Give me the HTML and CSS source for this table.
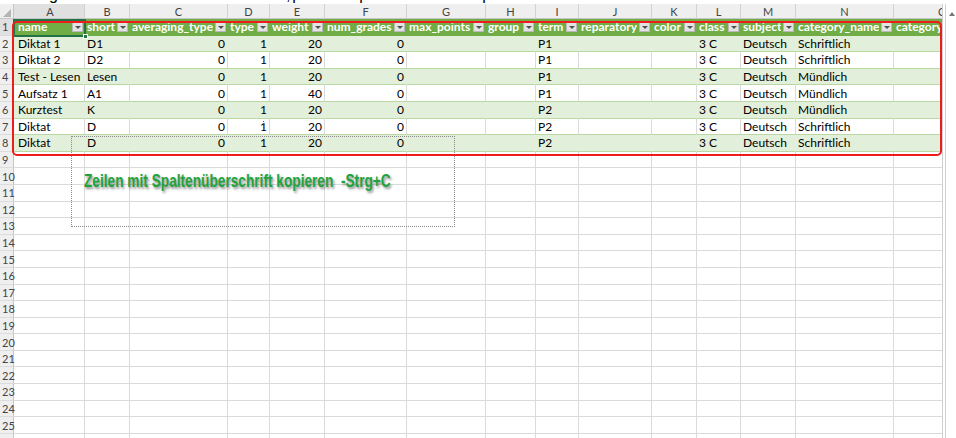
FILE: index.html
```html
<!DOCTYPE html>
<html lang="de">
<head>
<meta charset="utf-8">
<title>Tabelle</title>
<link rel="stylesheet" href="styles.css">
</head>
<body>
<div class="cut"><div class="cut-line"><span class="c1">g</span><span class="c2">,</span><span class="c3">p</span><span class="c4">p</span><span class="c5">p</span></div></div>
<div class="window">
  <div class="sheet">
    <div class="row colhdr">
      <div class="corner"><span class="tri"></span></div>
      <div class="active">A</div><div>B</div><div>C</div><div>D</div><div>E</div><div>F</div><div>G</div><div>H</div><div>I</div><div>J</div><div>K</div><div>L</div><div>M</div><div>N</div><div>O</div>
    </div>
    <div class="row thead">
      <div class="rn active">1</div>
      <div class="h"><span>name</span><i class="dd"></i></div>
      <div class="h"><span>short</span><i class="dd"></i></div>
      <div class="h"><span>averaging_type</span><i class="dd"></i></div>
      <div class="h"><span>type</span><i class="dd"></i></div>
      <div class="h"><span>weight</span><i class="dd"></i></div>
      <div class="h"><span>num_grades</span><i class="dd"></i></div>
      <div class="h"><span>max_points</span><i class="dd"></i></div>
      <div class="h"><span>group</span><i class="dd"></i></div>
      <div class="h"><span>term</span><i class="dd"></i></div>
      <div class="h"><span>reparatory</span><i class="dd"></i></div>
      <div class="h"><span>color</span><i class="dd"></i></div>
      <div class="h"><span>class</span><i class="dd"></i></div>
      <div class="h"><span>subject</span><i class="dd"></i></div>
      <div class="h"><span>category_name</span><i class="dd"></i></div>
      <div class="h"><span>category</span><i class="dd"></i></div>
    </div>
    <div class="row tr band"><div class="rn">2</div><div>Diktat 1</div><div>D1</div><div class="n">0</div><div class="n">1</div><div class="n">20</div><div class="n">0</div><div></div><div></div><div>P1</div><div></div><div></div><div>3 C</div><div>Deutsch</div><div>Schriftlich</div><div></div></div>
    <div class="row tr"><div class="rn">3</div><div>Diktat 2</div><div>D2</div><div class="n">0</div><div class="n">1</div><div class="n">20</div><div class="n">0</div><div></div><div></div><div>P1</div><div></div><div></div><div>3 C</div><div>Deutsch</div><div>Schriftlich</div><div></div></div>
    <div class="row tr band"><div class="rn">4</div><div>Test - Lesen</div><div>Lesen</div><div class="n">0</div><div class="n">1</div><div class="n">20</div><div class="n">0</div><div></div><div></div><div>P1</div><div></div><div></div><div>3 C</div><div>Deutsch</div><div>Mündlich</div><div></div></div>
    <div class="row tr"><div class="rn">5</div><div>Aufsatz 1</div><div>A1</div><div class="n">0</div><div class="n">1</div><div class="n">40</div><div class="n">0</div><div></div><div></div><div>P1</div><div></div><div></div><div>3 C</div><div>Deutsch</div><div>Mündlich</div><div></div></div>
    <div class="row tr band"><div class="rn">6</div><div>Kurztest</div><div>K</div><div class="n">0</div><div class="n">1</div><div class="n">20</div><div class="n">0</div><div></div><div></div><div>P2</div><div></div><div></div><div>3 C</div><div>Deutsch</div><div>Mündlich</div><div></div></div>
    <div class="row tr"><div class="rn">7</div><div>Diktat</div><div>D</div><div class="n">0</div><div class="n">1</div><div class="n">20</div><div class="n">0</div><div></div><div></div><div>P2</div><div></div><div></div><div>3 C</div><div>Deutsch</div><div>Schriftlich</div><div></div></div>
    <div class="row tr band"><div class="rn">8</div><div>Diktat</div><div>D</div><div class="n">0</div><div class="n">1</div><div class="n">20</div><div class="n">0</div><div></div><div></div><div>P2</div><div></div><div></div><div>3 C</div><div>Deutsch</div><div>Schriftlich</div><div></div></div>
    <div class="row"><div class="rn">9</div><div></div><div></div><div></div><div></div><div></div><div></div><div></div><div></div><div></div><div></div><div></div><div></div><div></div><div></div><div></div></div>
    <div class="row"><div class="rn">10</div><div></div><div></div><div></div><div></div><div></div><div></div><div></div><div></div><div></div><div></div><div></div><div></div><div></div><div></div><div></div></div>
    <div class="row"><div class="rn">11</div><div></div><div></div><div></div><div></div><div></div><div></div><div></div><div></div><div></div><div></div><div></div><div></div><div></div><div></div><div></div></div>
    <div class="row"><div class="rn">12</div><div></div><div></div><div></div><div></div><div></div><div></div><div></div><div></div><div></div><div></div><div></div><div></div><div></div><div></div><div></div></div>
    <div class="row"><div class="rn">13</div><div></div><div></div><div></div><div></div><div></div><div></div><div></div><div></div><div></div><div></div><div></div><div></div><div></div><div></div><div></div></div>
    <div class="row"><div class="rn">14</div><div></div><div></div><div></div><div></div><div></div><div></div><div></div><div></div><div></div><div></div><div></div><div></div><div></div><div></div><div></div></div>
    <div class="row"><div class="rn">15</div><div></div><div></div><div></div><div></div><div></div><div></div><div></div><div></div><div></div><div></div><div></div><div></div><div></div><div></div><div></div></div>
    <div class="row"><div class="rn">16</div><div></div><div></div><div></div><div></div><div></div><div></div><div></div><div></div><div></div><div></div><div></div><div></div><div></div><div></div><div></div></div>
    <div class="row"><div class="rn">17</div><div></div><div></div><div></div><div></div><div></div><div></div><div></div><div></div><div></div><div></div><div></div><div></div><div></div><div></div><div></div></div>
    <div class="row"><div class="rn">18</div><div></div><div></div><div></div><div></div><div></div><div></div><div></div><div></div><div></div><div></div><div></div><div></div><div></div><div></div><div></div></div>
    <div class="row"><div class="rn">19</div><div></div><div></div><div></div><div></div><div></div><div></div><div></div><div></div><div></div><div></div><div></div><div></div><div></div><div></div><div></div></div>
    <div class="row"><div class="rn">20</div><div></div><div></div><div></div><div></div><div></div><div></div><div></div><div></div><div></div><div></div><div></div><div></div><div></div><div></div><div></div></div>
    <div class="row"><div class="rn">21</div><div></div><div></div><div></div><div></div><div></div><div></div><div></div><div></div><div></div><div></div><div></div><div></div><div></div><div></div><div></div></div>
    <div class="row"><div class="rn">22</div><div></div><div></div><div></div><div></div><div></div><div></div><div></div><div></div><div></div><div></div><div></div><div></div><div></div><div></div><div></div></div>
    <div class="row"><div class="rn">23</div><div></div><div></div><div></div><div></div><div></div><div></div><div></div><div></div><div></div><div></div><div></div><div></div><div></div><div></div><div></div></div>
    <div class="row"><div class="rn">24</div><div></div><div></div><div></div><div></div><div></div><div></div><div></div><div></div><div></div><div></div><div></div><div></div><div></div><div></div><div></div></div>
    <div class="row"><div class="rn">25</div><div></div><div></div><div></div><div></div><div></div><div></div><div></div><div></div><div></div><div></div><div></div><div></div><div></div><div></div><div></div></div>
    <div class="row"><div class="rn">26</div><div></div><div></div><div></div><div></div><div></div><div></div><div></div><div></div><div></div><div></div><div></div><div></div><div></div><div></div><div></div></div>

    <div class="sel"><span class="handle"></span></div>
    <div class="caret"></div>
    <div class="textbox"><span class="note">Zeilen mit Spaltenüberschrift kopieren&nbsp; -Strg+C</span></div>
    <div class="redbox"></div>
  </div>
  <div class="vscroll"><span class="up"></span></div>
</div>
</body>
</html>
```
FILE: styles.css
```css
* { box-sizing: border-box; }
html, body { margin: 0; padding: 0; background: #fff; }
body {
  width: 956px;
  height: 438px;
  overflow: hidden;
  font-family: Lato, "Noto Sans", sans-serif;
  color: #000;
}

/* cut-off caption line at the very top */
.cut { height: 4px; overflow: hidden; }
.cut-line {
  display: flex;
  margin-top: -14px;
  height: 18px;
  font: 16px/18px "Liberation Sans", sans-serif;
}
.c1 { margin-left: 49px; }
.c2 { margin-left: 228px; }
.c3 { margin-left: 2px; }
.c4 { margin-left: 58px; }
.c5 { margin-left: 114px; }

.window { display: flex; height: 434px; }

.sheet {
  --cols: 14px 71px 45px 98px 42px 55px 82px 79px 50px 43px 73px 45px 44px 55px 98px 98px;
  position: relative;
  width: 942px;
  flex: none;
  overflow: hidden;
}

.row {
  display: grid;
  grid-template-columns: var(--cols);
  height: 16.6px;
  font-size: 12px;
}
.row > div {
  border-right: 1px solid #dadada;
  border-bottom: 1px solid #dadada;
  padding: 0 2px;
  display: flex;
  align-items: center;
  white-space: nowrap;
  overflow: hidden;
  min-width: 0;
}
.row > div:nth-child(2) { padding-left: 4px; }
.row > .n { justify-content: flex-end; }

/* column letters */
.colhdr { height: 15px; }
.colhdr > div {
  background: #efefef;
  border-right: 1px solid #d2d2d2;
  border-bottom: 1px solid #c6c6c6;
  justify-content: center;
  color: #444;
  font-size: 11px;
}
.colhdr > .active { background: #e0e0e0; }
.colhdr > .corner { position: relative; border-right-color: #c6c6c6; }
.tri {
  position: absolute;
  right: 2px;
  bottom: 1px;
  width: 0;
  height: 0;
  border-left: 8px solid transparent;
  border-bottom: 8px solid #b4b4b4;
}

/* row numbers */
.row > .rn {
  background: #efefef;
  border-right: 1px solid #c6c6c6;
  border-bottom: 1px solid #dcdcdc;
  color: #444;
  font-size: 11px;
  padding: 0 0 0 2px;
  overflow: visible;
  justify-content: flex-start;
}
.row > .rn.active { background: #e0e0e0; }

/* table header row */
.thead > div:not(.rn) {
  background: #70ad47;
  border-right: none;
  border-bottom: 1px solid #70ad47;
  color: #fff;
  font-weight: 700;
}
.thead .h span { overflow: hidden; flex: 1 1 auto; min-width: 0; }
.dd {
  flex: none;
  width: 11px;
  height: 10px;
  margin-left: 2px;
  background: #e3e3e3;
  border: 1px solid #b9b9b9;
  position: relative;
}
.dd::after {
  content: "";
  position: absolute;
  left: 2px;
  top: 3px;
  border-left: 3px solid transparent;
  border-right: 3px solid transparent;
  border-top: 3px solid #505050;
}

/* table body rows */
.tr > div:not(.rn) { border-bottom-color: #b9d8a3; }
.band > div:not(.rn) { background: #e2efda; border-right-color: #e2efda; }

/* overlays */
.sel {
  position: absolute;
  left: 13px;
  top: 15px;
  width: 73px;
  height: 18px;
  border: 2px solid #217346;
}
.handle {
  position: absolute;
  right: -4px;
  bottom: -4px;
  width: 5px;
  height: 5px;
  background: #217346;
  border: 1px solid #fff;
}
.redbox {
  position: absolute;
  left: 12px;
  top: 17px;
  width: 930px;
  height: 135px;
  border: 2px solid #ee1c1c;
  border-radius: 5px;
}
.textbox {
  position: absolute;
  left: 71px;
  top: 132px;
  width: 384px;
  height: 91px;
  border: 1px dotted #8a8a8a;
  padding: 34px 0 0 12px;
}
.note {
  display: inline-block;
  font: 700 19px/19px "Liberation Sans", sans-serif;
  color: #1fa33c;
  white-space: nowrap;
  transform: scaleX(0.72);
  transform-origin: left center;
  text-shadow: 2px 2px 3px rgba(0, 0, 0, 0.45);
}
.caret {
  position: absolute;
  left: 263px;
  top: 117px;
  height: 9px;
  border-left: 1px dotted #555;
}

/* vertical scrollbar */
.vscroll {
  flex: 1;
  position: relative;
  border-left: 4px double #cfcfcf;
  background: #fff;
}
.up {
  position: absolute;
  left: 3px;
  top: 8px;
  border-left: 3px solid transparent;
  border-right: 3px solid transparent;
  border-bottom: 4px solid #777;
}
```
